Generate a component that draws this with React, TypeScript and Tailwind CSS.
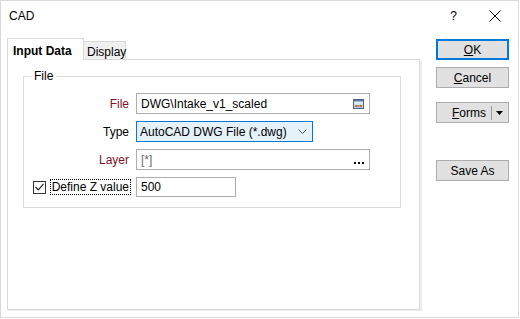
import React from 'react';

const font = "font-['Liberation_Sans',Arial,sans-serif]";

const Btn: React.FC<{ children: React.ReactNode; primary?: boolean }> = ({ children, primary }) => (
  <button
    className={`w-[73px] h-[21px] flex items-center justify-center bg-[#e1e1e1] text-[12px] text-black leading-none ${
      primary ? 'border-2 border-[#0078d7]' : 'border border-[#adadad]'
    }`}
  >
    {children}
  </button>
);

const FileIcon = () => (
  <svg width="11" height="10" viewBox="0 0 11 10">
    <defs>
      <linearGradient id="fg" x1="0" y1="0" x2="0" y2="1">
        <stop offset="0" stopColor="#ffffff" />
        <stop offset="1" stopColor="#a9c8ec" />
      </linearGradient>
    </defs>
    <rect x="0.5" y="0.5" width="10" height="9" fill="url(#fg)" stroke="#4a6486" />
    <rect x="1" y="1" width="9" height="1.5" fill="#5a7aa4" />
    <rect x="2" y="6" width="2" height="2" fill="#b8772a" />
    <rect x="4.5" y="6" width="2" height="2" fill="#b8772a" />
    <rect x="7" y="6" width="2" height="2" fill="#b8772a" />
  </svg>
);

export default function App() {
  return (
    <div className={`w-[520px] h-[319px] bg-white ${font} text-[12px] text-black`}>
      <div className="w-[519px] h-[318px] border border-[#d9d9d9] flex flex-col">
        {/* Title bar */}
        <div className="h-[37px] flex items-start pt-[5px] pl-[8px]">
          <span className="leading-[16px] mt-[2px]">CAD</span>
          <div className="ml-auto flex items-start">
            <span className="leading-[16px] mt-[2px] mr-[32px]">?</span>
            <svg width="12" height="12" viewBox="0 0 12 12" className="mt-[4px] mr-[17px]">
              <path d="M0.5 0.5 L11.5 11.5 M11.5 0.5 L0.5 11.5" stroke="#000" strokeWidth="1" />
            </svg>
          </div>
        </div>

        {/* Body */}
        <div className="flex pl-[6px]">
          {/* Tabs + panel */}
          <div className="w-[413px] flex flex-col">
            <div className="h-[21px] flex items-end">
              <div className="h-[22px] w-[77px] -mb-px relative z-10 bg-white border-l border-t border-r border-[#d9d9d9] pl-[5px] pt-[5px] font-bold leading-[14px]">
                Input Data
              </div>
              <div className="h-[18px] w-[42px] bg-[#f0f0f0] border-t border-r border-[#d9d9d9] pl-[3px] pt-[3px] leading-[14px]">
                Display
              </div>
            </div>
            <div className="h-[251px] border border-[#d9d9d9] bg-white shadow-[2px_1px_0_#ededed] pt-[8px] pl-[15px]">
              <fieldset className="w-[378px] border border-[#dcdcdc] pb-[10px]">
                <legend className="ml-[7px] px-[3px] leading-[16px]">File</legend>
                <div className="flex flex-col gap-[7px] pt-[9px]">
                  <div className="flex items-center h-[21px]">
                    <span className="w-[112px] text-right pr-[7px] text-[#7d1128]">File</span>
                    <div className="w-[234px] h-[21px] border border-[#adadad] flex items-center pl-[4px] pr-[5px]">
                      <span>DWG\Intake_v1_scaled</span>
                      <span className="ml-auto flex"><FileIcon /></span>
                    </div>
                  </div>
                  <div className="flex items-center h-[21px]">
                    <span className="w-[112px] text-right pr-[7px]">Type</span>
                    <div className="w-[177px] h-[21px] border border-[#0078d7] bg-[#e5f1fb] flex items-center pl-[3px] pr-[5px]">
                      <span>AutoCAD DWG File (*.dwg)</span>
                      <svg width="9" height="5" viewBox="0 0 9 5" className="ml-auto">
                        <path d="M0.5 0.5 L4.5 4.5 L8.5 0.5" fill="none" stroke="#555" strokeWidth="1" />
                      </svg>
                    </div>
                  </div>
                  <div className="flex items-center h-[21px]">
                    <span className="w-[112px] text-right pr-[7px] text-[#7d1128]">Layer</span>
                    <div className="w-[234px] h-[21px] border border-[#adadad] flex items-center pl-[4px] pr-[5px]">
                      <span className="text-[#6d6d6d]">[*]</span>
                      <span className="ml-auto flex gap-[2px] mt-[6px]">
                        <span className="w-[2px] h-[2px] bg-black" />
                        <span className="w-[2px] h-[2px] bg-black" />
                        <span className="w-[2px] h-[2px] bg-black" />
                      </span>
                    </div>
                  </div>
                  <div className="flex items-center h-[20px]">
                    <div className="w-[112px] flex items-center justify-end pr-[5px]">
                      <div className="w-[13px] h-[13px] border border-[#333] bg-white flex items-center justify-center">
                        <svg width="9" height="8" viewBox="0 0 9 8">
                          <path d="M0.5 4 L3.3 6.8 L8.5 0.8" fill="none" stroke="#222" strokeWidth="1.2" />
                        </svg>
                      </div>
                      <span className="ml-[4px] border border-dotted border-black px-[1px] leading-[14px]">
                        Define Z value
                      </span>
                    </div>
                    <div className="w-[100px] h-[20px] border border-[#adadad] flex items-center pl-[4px]">
                      <span>500</span>
                    </div>
                  </div>
                </div>
              </fieldset>
            </div>
          </div>

          {/* Buttons */}
          <div className="ml-[16px] mt-px flex flex-col">
            <Btn primary>
              <span className="underline">O</span>K
            </Btn>
            <div className="mt-[7px]">
              <Btn>
                <span className="underline">C</span>ancel
              </Btn>
            </div>
            <div className="mt-[14px]">
              <button className="w-[73px] h-[21px] flex items-center justify-end bg-[#e1e1e1] border border-[#adadad] leading-none pr-[5px]">
                <span>
                  <span className="underline">F</span>orms
                </span>
                <span className="w-px h-[14px] bg-[#9a9a9a] ml-[5px] mr-[4px]" />
                <svg width="7" height="4" viewBox="0 0 7 4">
                  <path d="M0 0 L7 0 L3.5 4 Z" fill="#000" />
                </svg>
              </button>
            </div>
            <div className="mt-[37px]">
              <Btn>Save As</Btn>
            </div>
          </div>
        </div>
      </div>
    </div>
  );
}
